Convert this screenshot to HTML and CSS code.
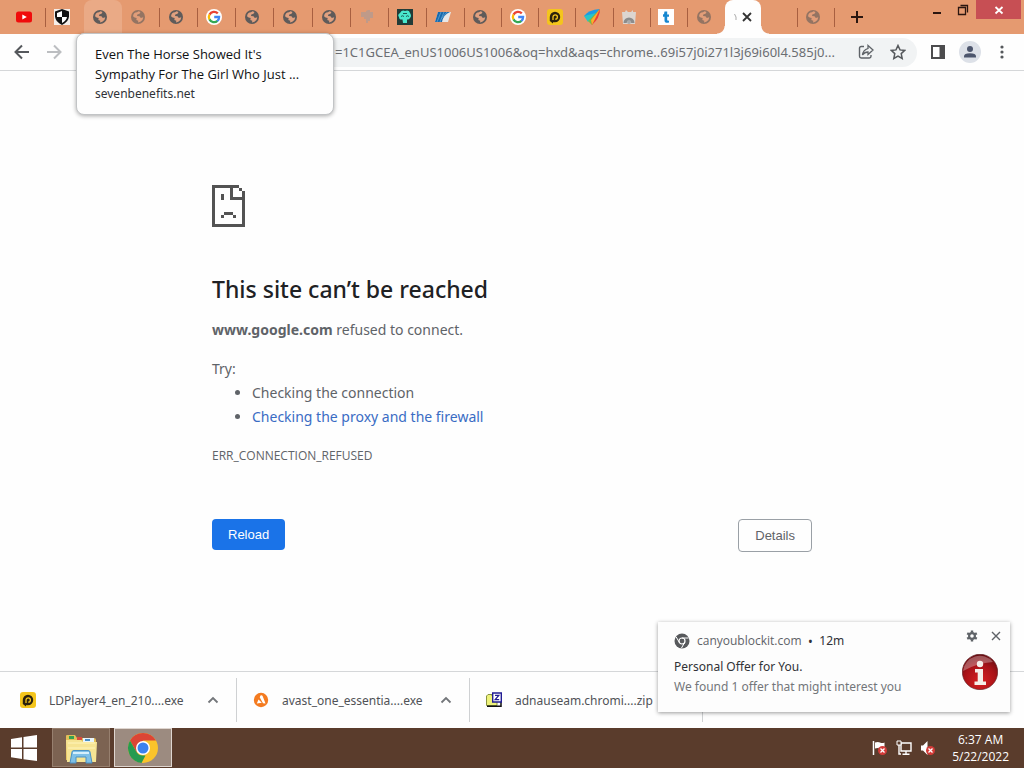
FILE: index.html
```html
<!DOCTYPE html>
<html lang="en">
<head>
<meta charset="utf-8">
<title>This site can’t be reached</title>
<link rel="stylesheet" href="styles.css">
</head>
<body>
<svg class="defs" aria-hidden="true">
  <symbol id="globe" viewBox="0 0 16 16"><circle cx="8" cy="8" r="7" fill="#5f5b5a"/><path d="M3 7.200Q3.500 3.500 7 3.300L8.500 2.300 10.500 3 9.500 4.800 7.300 5.500 7 7 9.500 7.200 10.800 9 13.300 8.200Q13 11.500 10.300 12.800L8 13.600 8.300 11.800 6.300 11 6.700 9 4.600 8.600Z" fill="#e0a07f"/><path d="M8.500 6.500h4l1-1.500" stroke="#5f5b5a" fill="none"/></symbol>
  <symbol id="google" viewBox="0 0 16 16"><circle cx="8" cy="8" r="8" fill="#fff"/><g fill="none" stroke-width="2.300"><path d="M11.800 4.400A5.200 5.200 0 0 0 3.500 5.600" stroke="#ea4335"/><path d="M3.500 5.500a5.200 5.200 0 0 0 0 5" stroke="#fbbc05"/><path d="M3.500 10.400a5.200 5.200 0 0 0 8 1.500" stroke="#34a853"/><path d="M8.200 8h4.900a5.200 5.200 0 0 1-1.800 4" stroke="#4285f4"/></g></symbol>
  <symbol id="ld" viewBox="0 0 16 16"><rect width="16" height="16" rx="3" fill="#f4c51c"/><path d="M2.800 11.500V8a5.200 5.200 0 1 1 5.200 5.200H6V14.500L2.800 12Z" fill="#2b210d"/><path d="M6 11V8a2.200 2.200 0 1 1 2.200 2.200" fill="none" stroke="#f4c51c" stroke-width="1.300"/></symbol>
  <symbol id="up" viewBox="0 0 12 12"><path d="m1.500 8.500 4.500-4.500 4.500 4.500" fill="none" stroke="#73767a" stroke-width="1.800"/></symbol>
  <symbol id="badx" viewBox="0 0 9 9"><circle cx="4.500" cy="4.500" r="4.500" fill="#d33b38"/><path d="m2.500 2.500 4 4m0-4-4 4" stroke="#fff" stroke-width="1.300"/></symbol>
</svg>

<header class="tabstrip">
  <nav class="tabs" aria-label="Tabs">
    <button class="tab" aria-label="YouTube"><svg viewBox="0 0 16 16"><rect y="2.500" width="16" height="11" rx="2.500" fill="#f00b0b"/><path d="m6.300 5.500 4.500 2.500-4.500 2.500Z" fill="#fff"/></svg></button>
    <button class="tab plain" aria-label="Shield"><svg viewBox="0 0 16 16"><path d="M0 0h16v16H0Z" fill="#f5eee9"/><path d="m8 0 7 2.500v5Q14.500 13 8 16 1.500 13 1 7.500v-5Z" fill="#111"/><path d="M8 2v6H3V4Zm0 6h5Q12.500 11.500 8 14Z" fill="#fff"/></svg></button>
    <button class="tab hover plain" aria-label="Even The Horse Showed It's Sympathy For The Girl Who Just"><svg><use href="#globe"/></svg></button>
    <button class="tab" aria-label="Tab"><svg class="dim"><use href="#globe"/></svg></button>
    <button class="tab" aria-label="Tab"><svg><use href="#globe"/></svg></button>
    <button class="tab" aria-label="Google"><svg><use href="#google"/></svg></button>
    <button class="tab" aria-label="Tab"><svg><use href="#globe"/></svg></button>
    <button class="tab" aria-label="Tab"><svg><use href="#globe"/></svg></button>
    <button class="tab" aria-label="Tab"><svg><use href="#globe"/></svg></button>
    <button class="tab" aria-label="Tab"><svg viewBox="0 0 16 16"><path d="M2 3h5v7H5V8H2Zm7-2h2v2h3v6h-3v3H9v2H7V2Z" fill="#bf9a89"/></svg></button>
    <button class="tab" aria-label="Tab"><svg viewBox="0 0 16 16"><path d="M0 0h16v16H0Z" fill="#213c38"/><path d="M3 4Q5 .500 8 2q4-1.500 5 2 2 3 0 5-1 2-3 1.500L10 14H6l-.500-3.500Q2 11 2 8 0 6 3 4Z" fill="#49e8cd"/><path d="M4 7.500q1.500-1.500 3 0m2 0q1.500-1.500 3 0M6 4.500h4" stroke="#1c5c55" fill="none"/></svg></button>
    <button class="tab" aria-label="Tab"><svg viewBox="0 0 16 16"><path d="M3 3h13L13 13H0Z" fill="#e8e8e8"/><path d="M3 3h12Q8 6 7 13H0Z" fill="#1769ad"/><path d="m6 3-4 10M9 3 5 13m7-10-6 7" stroke="#5fa3d1" stroke-width=".8"/></svg></button>
    <button class="tab" aria-label="Tab"><svg><use href="#globe"/></svg></button>
    <button class="tab" aria-label="Google"><svg><use href="#google"/></svg></button>
    <button class="tab" aria-label="LDPlayer"><svg><use href="#ld"/></svg></button>
    <button class="tab" aria-label="Tab"><svg viewBox="0 0 16 16"><path d="M0 7Q4 1 16 0L9 9Z" fill="#1d9be4"/><path d="m0 7 12-3-8 9Z" fill="#29c4c8"/><path d="M16 0 4 12l4 4Z" fill="#6cc24a"/><path d="M16 0Q16 9 8 16l-1-5Z" fill="#ef3e36"/><path d="M16 0 7 11l1 5Z" fill="#f7b32b"/></svg></button>
    <button class="tab" aria-label="Web store"><svg viewBox="0 0 16 16"><path d="M1 3h3l1-2 2 2h3l2-2v2h3l-1 12H2Z" fill="#dcd5d0"/><path d="M2.500 14a5.500 5.500 0 0 1 11 0h-3.200a2.400 2.400 0 0 0-4.700 0Z" fill="#8c8c8c"/><circle cx="8" cy="13" r="2" fill="#aaa"/></svg></button>
    <button class="tab" aria-label="Tab"><svg viewBox="0 0 16 16"><path d="M0 0h16v16H0Z" fill="#fff"/><path d="M6.500 2.500h2.700V5.500H11v2.200H9.200V11q0 .8 1.800.6v2q-4.500.8-4.500-2.100V7.700H5V5.500q1.500-.5 1.500-3Z" fill="#1687d0"/></svg></button>
    <button class="tab plain" aria-label="Tab"><svg class="dim"><use href="#globe"/></svg></button>
    <button class="tab active plain" aria-label="Close current tab"><svg class="slip" viewBox="0 0 3 10"><path d="m.500 2 1.500 3v3" fill="none" stroke="#aaa"/></svg><svg viewBox="0 0 16 16"><path d="m4 4 8 8m0-8-8 8" stroke="#333" stroke-width="1.800"/></svg></button>
    <button class="tab" aria-label="Tab"></button>
    <button class="tab" aria-label="Tab"><svg class="dim"><use href="#globe"/></svg></button>
  </nav>
  <button class="newtab" aria-label="New tab"><svg viewBox="0 0 16 16"><path d="M8 2v12M2 8h12" stroke="#2b1610" stroke-width="2"/></svg></button>
  <div class="window">
    <button aria-label="Minimize"><svg viewBox="0 0 12 12"><path d="M2 9h8" stroke="#2b1610" stroke-width="2"/></svg></button>
    <button aria-label="Restore"><svg viewBox="0 0 12 12"><path d="M1.500 3.500h7v7h-7Zm2-2h7v7" fill="none" stroke="#2b1610" stroke-width="1.300"/></svg></button>
    <button class="close" aria-label="Close"><svg viewBox="0 0 12 12"><path d="m2.500 3 7 6.500m0-6.500-7 6.500" stroke="#fff" stroke-width="1.800"/></svg></button>
  </div>
</header>

<div class="toolbar">
  <button class="icon" aria-label="Back"><svg viewBox="0 0 16 16"><path d="M15 8H2m6-6.500L1.500 8 8 14.500" fill="none" stroke="#55585c" stroke-width="2"/></svg></button>
  <button class="icon" aria-label="Forward"><svg viewBox="0 0 16 16"><path d="M1 8h13M8 1.500 14.500 8 8 14.500" fill="none" stroke="#bcbec1" stroke-width="2"/></svg></button>
  <div class="omnibox">
    <input class="url" type="text" aria-label="Address" value="=1C1GCEA_enUS1006US1006&amp;oq=hxd&amp;aqs=chrome..69i57j0i271l3j69i60l4.585j0...">
    <button class="icon" aria-label="Share"><svg viewBox="0 0 16 16"><path d="M6 2.500H3.200q-1.700 0-1.700 1.700v8.100q0 1.700 1.700 1.700h8.100q1.700 0 1.700-1.700V11" fill="none" stroke="#5f6368" stroke-width="1.400"/><path d="M10 1.500 15 6l-5 4.500V8Q6.500 8 4.500 11q.5-5 5.500-6.500Z" fill="none" stroke="#5f6368" stroke-width="1.300"/></svg></button>
    <button class="icon" aria-label="Bookmark"><svg viewBox="0 0 16 16"><path d="m8 1.500 2 4.400 4.800.5-3.600 3.200 1 4.800L8 12l-4.200 2.400 1-4.800L1.200 6.400 6 5.900Z" fill="none" stroke="#55585c" stroke-width="1.500"/></svg></button>
  </div>
  <button class="icon" aria-label="Side panel"><svg viewBox="0 0 16 16"><path d="M2 2h12v12H2Z" fill="none" stroke="#4c4c4e" stroke-width="2"/><path d="M9.500 2H14v12H9.500Z" fill="#4c4c4e"/></svg></button>
  <button class="icon profile" aria-label="Profile"><svg viewBox="0 0 16 16"><circle cx="8" cy="5" r="3" fill="#4d566d"/><path d="M2 13.500v-1.300Q2 9.300 8 9.300t6 2.900v1.300Z" fill="#4d566d"/></svg></button>
  <button class="icon" aria-label="Menu"><svg viewBox="0 0 16 16"><g fill="#55585c"><circle cx="8" cy="3" r="1.600"/><circle cx="8" cy="8" r="1.600"/><circle cx="8" cy="13" r="1.600"/></g></svg></button>
</div>

<div class="hovercard" role="tooltip">
  <p class="cardtitle">Even The Horse Showed It's Sympathy For The Girl Who Just ...</p>
  <p class="cardsite">sevenbenefits.net</p>
</div>

<main class="page">
  <div class="error">
    <svg class="sad" viewBox="0 0 33 42" shape-rendering="crispEdges" aria-hidden="true"><path fill="#535353" d="M0 0h27v3H3v36h27V15H18V3h3v9h9V6h3v36H0ZM27 3h3v3h-3ZM9 9h3v6H9Zm3 18h9v3h-9Zm-3 3h3v3H9Zm12 0h3v3h-3Z"/></svg>
    <h1>This site can’t be reached</h1>
    <p class="refused"><strong>www.google.com</strong> refused to connect.</p>
    <p class="try">Try:</p>
    <ul>
      <li>Checking the connection</li>
      <li><a href="#buttons">Checking the proxy and the firewall</a></li>
    </ul>
    <p class="code">ERR_CONNECTION_REFUSED</p>
    <div class="buttons" id="buttons">
      <button class="reload">Reload</button>
      <button class="details">Details</button>
    </div>
  </div>
</main>

<section class="downloads" aria-label="Downloads">
  <div class="download"><svg class="file"><use href="#ld"/></svg><span>LDPlayer4_en_210....exe</span><button aria-label="Options"><svg><use href="#up"/></svg></button></div>
  <div class="download"><svg class="file" viewBox="0 0 16 16"><circle cx="8" cy="8" r="7.200" fill="#f47b20"/><path d="M7.500 3.500q1.500-.8 2.200.7l2.800 7.300-2.500-.3-3.300-6Zm-2 4 3.300 3.200-5 .8Z" fill="#fff"/></svg><span>avast_one_essentia....exe</span><button aria-label="Options"><svg><use href="#up"/></svg></button></div>
  <div class="download"><svg class="file" viewBox="0 0 16 16"><path d="M.500 4l1.500-1.500h4V4h5v9.500H.500Z" fill="#eef27a" stroke="#8a9440"/><path d="M1 14.300h14V10" fill="none" stroke="#111" stroke-width="1.500"/><path d="M6.700 1h8.600v9H6.700Z" fill="#fff" stroke="#211c93" stroke-width="1.400"/><path d="M9 3.300h3.800L9.200 7.700h4" fill="none" stroke="#211c93" stroke-width="1.300"/></svg><span>adnauseam.chromi....zip</span><button aria-label="Options"><svg><use href="#up"/></svg></button></div>
</section>

<aside class="notice">
  <div class="noticetext">
    <p class="source"><svg viewBox="0 0 16 16"><circle cx="8" cy="8" r="7.500" fill="#57595c"/><circle cx="8" cy="8" r="3" fill="none" stroke="#fff" stroke-width="1.200"/><path d="M8 5h6.500M5.400 9.500 2.200 4M10.600 9.500 7.500 15" stroke="#fff"/></svg><span>canyoublockit.com</span><b>•</b><time>12m</time></p>
    <p class="offer">Personal Offer for You.</p>
    <p class="found">We found 1 offer that might interest you</p>
  </div>
  <div class="noticeside">
    <div class="noticebtns">
      <button aria-label="Settings"><svg viewBox="0 0 12 12"><circle cx="6" cy="6" r="2.900" fill="none" stroke="#5f6368" stroke-width="2.200"/><path d="M6 .500v2M6 9.500v2M1.200 3.200l1.800 1M9 7.800l1.800 1M1.200 8.800l1.800-1M9 4.200l1.800-1" stroke="#5f6368" stroke-width="2.400"/></svg></button>
      <button aria-label="Dismiss"><svg viewBox="0 0 12 12"><path d="m2 2 8 8m0-8-8 8" stroke="#5f6368" stroke-width="1.400"/></svg></button>
    </div>
    <svg class="info" viewBox="0 0 36 36" aria-hidden="true"><defs><radialGradient id="red" cx=".5" cy=".75" r=".75"><stop offset="0" stop-color="#d71f20"/><stop offset=".6" stop-color="#a91318"/><stop offset="1" stop-color="#650d12"/></radialGradient></defs><circle cx="18" cy="18" r="17.700" fill="url(#red)" stroke="#5d1a1c" stroke-width=".6"/><path d="M1 17A17 17 0 0 1 31 8Q15 9 1 17Z" fill="#fff" opacity=".3"/><circle cx="18" cy="10" r="3.200" fill="#f5efe9"/><path d="M13 15h8v12.500h3V31H12.500v-3.500h3.200v-9H13Z" fill="#f5efe9"/></svg>
  </div>
</aside>

<footer class="taskbar">
  <button class="start" aria-label="Start"><svg viewBox="0 0 26 26"><path d="M0 4 11 2.300V12.500H0Zm12.500-2L26 0v12.500H12.500ZM0 14h11v10L0 22.300Zm12.500 0H26v12l-13.500-1.800Z" fill="#fff"/></svg></button>
  <button class="app" aria-label="File Explorer"><svg viewBox="0 0 34 34"><path d="M2 5q0-1 1-1h8l2 3h17q2 0 2 2v20H2Z" fill="#e3bf59"/><path d="M5 5h5v3H5Z" fill="#35a151"/><path d="M13 6h5v3h-5Z" fill="#d84b3c"/><path d="M19 7h11v4H19Z" fill="#e8f5fb"/><path d="M21 8h5v2h-5Z" fill="#498fc7"/><path d="M2 9h15l2 2h14l-1 20H3Z" fill="#f6e493"/><path d="M4 12h27M4 17h27" stroke="#fff5bb"/><path d="M6 32 8 21q0-1.500 2-1.500h14q2 0 2 1.500l2 11h-6v-6H12v6Z" fill="#7ec0e7" stroke="#4b91c3"/><path d="M9 22h16" stroke="#d5effc" stroke-width="2"/></svg></button>
  <button class="app current" aria-label="Chrome"><svg viewBox="0 0 34 34"><circle cx="17" cy="17" r="15" fill="#fac42b"/><path d="M4 9.500A15 15 0 0 1 30 9.500H17L10.500 21Z" fill="#dc4535"/><path d="M4 9.500 10.500 21A7.500 7.500 0 0 0 17 24.500h2.500L15.500 32A15 15 0 0 1 4 9.500Z" fill="#269b50"/><circle cx="17" cy="17" r="7" fill="#fff"/><circle cx="17" cy="17" r="5.500" fill="#3c82ed"/></svg></button>
  <div class="tray">
    <button aria-label="Action center"><svg viewBox="0 0 16 16"><path d="M1.500 1v14" stroke="#fff" stroke-width="1.500"/><path d="M3 2.500q3-1 5 0t4.500 0V9Q10 9.500 8 8.500t-5 0Z" fill="#fff"/><use href="#badx" x="6" y="6" width="9" height="9"/></svg></button>
    <button aria-label="Network"><svg viewBox="0 0 16 16"><path d="M5 3h10v8H5Zm5 8v3M6.500 14.300h7M3 5v9h2" fill="none" stroke="#fff" stroke-width="1.400"/><path d="M1 1h4v4H1Z" fill="#5a3c2c" stroke="#fff"/></svg></button>
    <button aria-label="Volume"><svg viewBox="0 0 16 16"><path d="M1 5.500h2L7.500 1v14L3 10.500H1Z" fill="#fff"/><use href="#badx" x="6" y="6" width="9" height="9"/></svg></button>
    <time class="clock"><span>6:37 AM</span><span>5/22/2022</span></time>
  </div>
</footer>
</body>
</html>
```
FILE: styles.css
```css
* { box-sizing: border-box; }
body {
  margin: 0;
  min-height: 100vh;
  display: flex;
  flex-direction: column;
  position: relative;
  background: #fefefe;
  color: #5f6368;
  font-family: "Noto Sans", "Open Sans", sans-serif;
  font-size: 13px;
}
p, h1, ul { margin: 0; }
svg { display: block; }
button { border: 0; padding: 0; background: none; font: inherit; display: flex; align-items: center; justify-content: center; }
.defs { position: absolute; width: 0; height: 0; }

.tabstrip { height: 34px; display: flex; background: #e59a70; padding-left: 8px; }
.tabs { flex: 1; display: flex; }
.tab { flex: 37 1 0; min-width: 0; position: relative; padding-right: 6px; }
.tab:nth-child(-n+12) { flex-grow: 38; }
.tab svg { width: 16px; height: 16px; flex: none; }
.tab::after { content: ""; position: absolute; right: 0; top: 8px; width: 1px; height: 19px; background: #a85f40; }
.tab.plain::after { display: none; }
.tab .dim { opacity: .6; }
.tab.hover { background: #eaaa86; border-radius: 8px 8px 0 0; }
.tab.active { background: #fefefe; border-radius: 8px 8px 0 0; padding: 0 0 0 4px; gap: 2px; }
.tab.active::before {
  content: ""; position: absolute; left: -8px; right: -8px; bottom: 0; height: 8px;
  background:
    radial-gradient(circle at 0 0, transparent 7px, #fefefe 8px) left / 8px 8px no-repeat,
    radial-gradient(circle at 100% 0, transparent 7px, #fefefe 8px) right / 8px 8px no-repeat;
}
.tab .slip { width: 3px; height: 10px; }
.newtab { width: 44px; }
.newtab svg { width: 16px; height: 16px; }
.window { width: 145px; display: flex; justify-content: flex-end; align-items: flex-start; padding-right: 3px; }
.window button { width: 26px; height: 19px; }
.window .close { width: 45px; background: #c74f54; }
.window svg { width: 12px; height: 12px; }

.toolbar { height: 37px; display: flex; align-items: center; gap: 8px; padding: 0 10px; border-bottom: 1px solid #d5d7d9; }
.icon { width: 24px; height: 24px; flex: none; }
.icon svg { width: 16px; height: 16px; }
.omnibox { flex: 1; min-width: 0; height: 29px; margin: 0 1px 0 48px; border-radius: 15px; background: #f1f3f4; display: flex; align-items: center; gap: 8px; padding: 0 7px 0 0; }
.url { flex: 1; min-width: 0; padding: 0 0 0 213px; border: 0; outline: 0; background: none; font: inherit; font-size: 13px; color: #6b6e72; }
.profile { border: 1px solid transparent; border-radius: 50%; background: #dde1e8; background-clip: padding-box; }

.hovercard { position: absolute; left: 76px; top: 33px; width: 258px; padding: 10px 18px; border: 1px solid #c2c4c6; border-radius: 8px; background: #fefefe; box-shadow: 0 1px 4px #0005; color: #303236; font-size: 12px; line-height: 20px; z-index: 2; }
.cardtitle { font-family: "Open Sans", sans-serif; font-size: 13px; color: #111214; }

.page { flex: 1; padding: 114px 24px 0; }
.error { max-width: 600px; margin: 0 auto; font-size: 14px; line-height: 24px; }
.sad { width: 33px; height: 42px; }
h1 { margin-top: 45px; color: #202124; font-size: 23px; line-height: 34px; font-weight: 500; }
.refused { margin-top: 12px; }
.try { margin-top: 15px; }
ul { padding-left: 40px; }
a { color: #3a6cc4; text-decoration: none; }
.code { margin-top: 15px; font-family: "Open Sans", sans-serif; font-size: 12px; }
.buttons { margin-top: 51px; display: flex; justify-content: space-between; align-items: flex-start; }
.reload, .details { border-radius: 4px; font-family: "Liberation Sans", Arial, sans-serif; font-size: 13px; padding: 0 16px; }
.reload { height: 31px; background: #1a73e8; color: #fff; }
.details { height: 33px; border: 1px solid #9aa0a6; color: #5f6368; }

.downloads { height: 57px; display: flex; align-items: center; padding-left: 4px; border-top: 1px solid #d5d7d9; }
.download { width: 233px; height: 44px; display: flex; align-items: center; padding: 0 11px 0 16px; gap: 13px; border-right: 1px solid #cfd1d3; font-size: 12px; color: #505256; }
.download .file { width: 16px; height: 16px; flex: none; }
.download span { flex: 1; min-width: 0; white-space: nowrap; }
.download button { width: 24px; height: 24px; flex: none; }
.download button svg { width: 12px; height: 12px; }

.notice { position: absolute; right: 14px; bottom: 56px; width: 352px; height: 90px; display: flex; justify-content: space-between; padding: 8px 8px 0 16px; background: #fdfdfd; box-shadow: 0 1px 4px #0006; font-size: 12px; line-height: 20px; }
.noticetext { padding-top: 1px; }
.source { display: flex; align-items: center; gap: 7px; margin-bottom: 6px; }
.source span { font-family: "Open Sans", sans-serif; }
.source svg { width: 16px; height: 16px; }
.source b { font-size: 10px; color: #303236; }
.source time, .offer { color: #303236; }
.found { white-space: nowrap; color: #73767a; }
.noticeside { display: flex; flex-direction: column; align-items: flex-end; gap: 12px; }
.noticebtns { display: flex; gap: 12px; }
.noticebtns button, .noticebtns svg { width: 12px; height: 12px; }
.info { width: 36px; height: 36px; margin-right: 4px; }

.taskbar { height: 40px; display: flex; background: #5a3c2c; color: #fff; }
.start { width: 48px; }
.start svg { width: 26px; height: 26px; }
.app { width: 58px; height: 39px; margin-left: 4px; border: 1px solid #97806f; background: #7c6352; }
.app.current { border-color: #ded5cf; background: #9c8b80; }
.app svg { width: 34px; height: 34px; }
.tray { margin-left: auto; display: flex; align-items: center; gap: 8px; padding-right: 16px; }
.tray svg { width: 16px; height: 16px; }
.clock { display: flex; flex-direction: column; align-items: center; margin-left: 8px; font-family: "Open Sans", sans-serif; font-size: 12px; line-height: 17px; }
.tray { padding-right: 15px; }
```
